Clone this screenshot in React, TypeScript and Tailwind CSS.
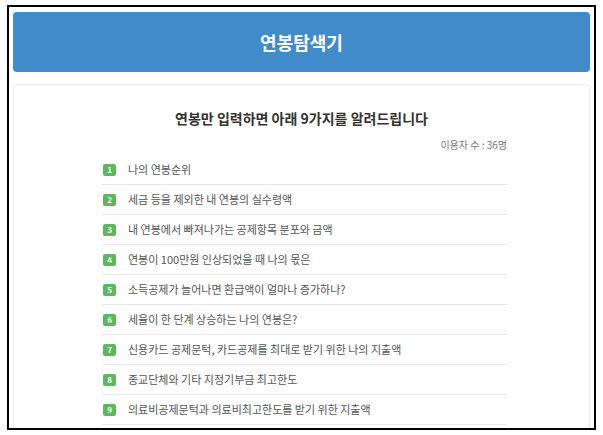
const ITEMS = [
  '나의 연봉순위',
  '세금 등을 제외한 내 연봉의 실수령액',
  '내 연봉에서 빠져나가는 공제항목 분포와 금액',
  '연봉이 100만원 인상되었을 때 나의 몫은',
  '소득공제가 늘어나면 환급액이 얼마나 증가하나?',
  '세율이 한 단계 상승하는 나의 연봉은?',
  '신용카드 공제문턱, 카드공제를 최대로 받기 위한 나의 지출액',
  '종교단체와 기타 지정기부금 최고한도',
  '의료비공제문턱과 의료비최고한도를 받기 위한 지출액',
];

export default function App() {
  return (
    <div
      className="w-[603px] h-[435px] bg-white pt-[5px] pl-[7px] overflow-hidden"
      style={{ fontFamily: '"Noto Sans CJK KR", "Noto Sans", sans-serif' }}
    >
      <div className="w-[589px] h-[425px] border-2 border-black overflow-hidden px-[4px] pt-[5px]">
        {/* Header */}
        <div className="h-[60px] bg-[#428bca] rounded-[4px] flex items-center justify-center">
          <h1 className="text-white text-[18px] font-bold leading-none">연봉탐색기</h1>
        </div>

        {/* Card */}
        <div className="mt-[12px] h-[400px] border border-[#eeeeee] rounded-[4px] pt-[23px]">
          <h2 className="text-center text-[14px] leading-[20px] font-bold text-[#333333]">
            연봉만 입력하면 아래 9가지를 알려드립니다
          </h2>

          <div className="ml-[88px] w-[405px]">
            <p className="mt-[10px] text-right text-[10px] leading-[14px] text-[#777777]">이용자 수 : 36명</p>

            <ul className="mt-[3px]">
              {ITEMS.map((t, i) => (
                <li
                  key={i}
                  className="h-[30px] flex items-center border-b border-[#e8e8e8] pl-[1px]"
                >
                  <span className="w-[13px] h-[12px] rounded-[2px] bg-[#5cb85c] text-white text-[8px] font-bold leading-none flex items-center justify-center">
                    {i + 1}
                  </span>
                  <span className="ml-[12px] text-[11px] text-[#555555] leading-none">{t}</span>
                </li>
              ))}
            </ul>
          </div>
        </div>
      </div>
    </div>
  );
}
